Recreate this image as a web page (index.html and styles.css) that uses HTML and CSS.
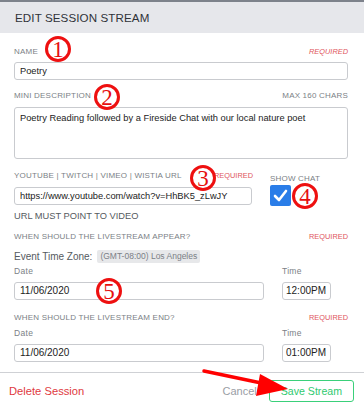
FILE: index.html
```html
<!DOCTYPE html>
<html>
<head>
<meta charset="utf-8">
<link rel="stylesheet" href="styles.css">
</head>
<body>
<div class="page">
  <div class="header"><h1 class="title">EDIT SESSION STREAM</h1></div>
  <div class="content">
    <div class="row label-row first">
      <span class="label">NAME</span>
      <span class="req italic">REQUIRED</span>
    </div>
    <div class="input">Poetry</div>

    <div class="row label-row gap11">
      <span class="label">MINI DESCRIPTION</span>
      <span class="label">MAX 160 CHARS</span>
    </div>
    <div class="input textarea">Poetry Reading followed by a Fireside Chat with our local nature poet</div>

    <div class="url-block">
      <div class="url-col">
        <div class="row label-row">
          <span class="label">YOUTUBE | TWITCH | VIMEO | WISTIA URL</span>
          <span class="req">REQUIRED</span>
        </div>
        <div class="input">https://www.youtube.com/watch?v=HhBK5_zLwJY</div>
      </div>
      <div class="chat-col">
        <div class="label-row"><span class="label">SHOW CHAT</span></div>
        <div class="checkbox">
          <svg width="21" height="21" viewBox="0 0 21 21"><path d="M5 11 L9 15 L16 6" fill="none" stroke="#fff" stroke-width="2.6" stroke-linecap="round" stroke-linejoin="round"/></svg>
        </div>
      </div>
    </div>
    <div class="hint">URL MUST POINT TO VIDEO</div>

    <div class="row label-row gap10">
      <span class="label">WHEN SHOULD THE LIVESTREAM APPEAR?</span>
      <span class="req">REQUIRED</span>
    </div>
    <div class="tz-row">
      <span class="tz-label">Event Time Zone:</span>
      <span class="tz-tag">(GMT-08:00) Los Angeles</span>
    </div>
    <div class="dt-row">
      <div class="date-col">
        <div class="small">Date</div>
        <div class="input dt">11/06/2020</div>
      </div>
      <div class="time-col">
        <div class="small">Time</div>
        <div class="input dt time">12:00PM</div>
      </div>
    </div>

    <div class="row label-row gap13">
      <span class="label">WHEN SHOULD THE LIVESTREAM END?</span>
      <span class="req">REQUIRED</span>
    </div>
    <div class="dt-row end">
      <div class="date-col">
        <div class="small">Date</div>
        <div class="input dt">11/06/2020</div>
      </div>
      <div class="time-col">
        <div class="small">Time</div>
        <div class="input dt time">01:00PM</div>
      </div>
    </div>
  </div>
  <div class="footer">
    <span class="delete">Delete Session</span>
    <div class="actions">
      <span class="cancel">Cancel</span>
      <span class="save">Save Stream</span>
    </div>
  </div>

  <div class="mark m1">1</div>
  <div class="mark m2">2</div>
  <div class="mark m3">3</div>
  <div class="mark m4">4</div>
  <div class="mark m5">5</div>
  <svg class="arrow" width="364" height="409" viewBox="0 0 364 409">
    <line x1="204" y1="371" x2="266" y2="384" stroke="#f00" stroke-width="3.5" stroke-linecap="round"/>
    <polygon points="288,389 260,374 256,396" fill="#f00"/>
  </svg>
</div>
</body>
</html>
```
FILE: styles.css
```css
* { box-sizing: border-box; }
html, body { margin: 0; padding: 0; background: #fff; }
body { font-family: "Liberation Sans", Arial, sans-serif; color: #333; }
.page { position: relative; width: 364px; height: 409px; overflow: hidden; }

.header {
  height: 33px;
  background: #e6e7eb;
  border-top: 2px solid #7d828b;
  padding-left: 15px;
  display: flex;
  align-items: center;
}
.title {
  margin: 0;
  font-size: 11.6px;
  font-weight: normal;
  letter-spacing: 0.1px;
  color: #2f3238;
}

.content { padding: 0 16px 0 14px; }
.row { display: flex; justify-content: space-between; align-items: center; }
.label-row { height: 10px; line-height: 10px; margin-bottom: 5px; }
.first { margin-top: 14px; }
.gap11 { margin-top: 11px; margin-bottom: 6px; }
.gap10 { margin-top: 10px; }
.gap13 { margin-top: 13px; }
.label { font-size: 8px; letter-spacing: 0.2px; color: #7b7f86; white-space: nowrap; }
.req { font-size: 7.4px; color: #e0555c; letter-spacing: 0; }
.italic { font-style: italic; }

.input {
  height: 18px;
  border: 1px solid #c9cbcf;
  border-radius: 3px;
  font-size: 9.3px;
  line-height: 16px;
  padding-left: 5px;
  color: #222;
  white-space: nowrap;
  overflow: hidden;
}
.input.dt { font-size: 10px; }
.textarea { height: 52px; line-height: 18px; padding-top: 1px; padding-left: 5px; }

.url-block { display: flex; margin-top: 12px; }
.url-col { width: 238px; }
.url-col .label-row { margin-bottom: 6px; }
.url-col .req { margin-right: -1px; }
.chat-col { margin-left: 18px; }
.chat-col .label-row { margin-bottom: 4px; }
.checkbox { width: 21px; height: 21px; background: #2a7de8; border-radius: 2px; }
.checkbox svg { display: block; }

.hint { font-size: 9.3px; letter-spacing: 0; color: #555a60; line-height: 12px; margin-top: 4px; }

.tz-row { display: flex; align-items: center; margin-top: 8px; height: 13px; }
.tz-label { font-size: 10px; color: #555a60; letter-spacing: 0; }
.tz-tag {
  margin-left: 5px;
  background: #e7e8ea;
  color: #7b7f86;
  font-size: 8.5px;
  letter-spacing: 0;
  height: 13px;
  line-height: 13px;
  padding: 0 3px;
  border-radius: 2px;
}

.dt-row { display: flex; justify-content: space-between; margin-top: 3px; }
.dt-row.end { margin-top: 0; }
.date-col { width: 250px; }
.time-col { width: 49px; margin-right: 17px; }
.small { font-size: 8.5px; color: #7b7f86; letter-spacing: 0.3px; height: 10px; line-height: 10px; margin-bottom: 6px; }
.input.time { padding-left: 3px; letter-spacing: 0; }

.footer {
  margin-top: 10px;
  border-top: 1px solid #cfd1d5;
  display: flex;
  justify-content: space-between;
  align-items: center;
  padding: 7px 10px 0 9px;
}
.delete { font-size: 11.2px; color: #e0393e; letter-spacing: 0; }
.actions { display: flex; align-items: center; }
.cancel { font-size: 11px; color: #9a9ea5; letter-spacing: 0; margin-right: 12px; }
.save {
  font-size: 10.6px;
  color: #2fc96f;
  border: 1px solid #3ad07a;
  border-radius: 3px;
  height: 22px;
  line-height: 20px;
  padding: 0 11px;
  letter-spacing: 0;
}

.mark {
  position: absolute;
  width: 26px; height: 26px;
  border: 3px solid #ee1010;
  border-radius: 50%;
  background: #fff;
  color: #e60f0f;
  font-family: "Liberation Serif", "Times New Roman", serif;
  font-size: 23px;
  line-height: 21px;
  text-align: center;
}
.m1 { left: 45px; top: 36px; }
.m2 { left: 94px; top: 84px; }
.m3 { left: 190px; top: 165px; }
.m4 { left: 292px; top: 183px; }
.m5 { left: 96px; top: 278px; }
.arrow { position: absolute; left: 0; top: 0; pointer-events: none; }
```
